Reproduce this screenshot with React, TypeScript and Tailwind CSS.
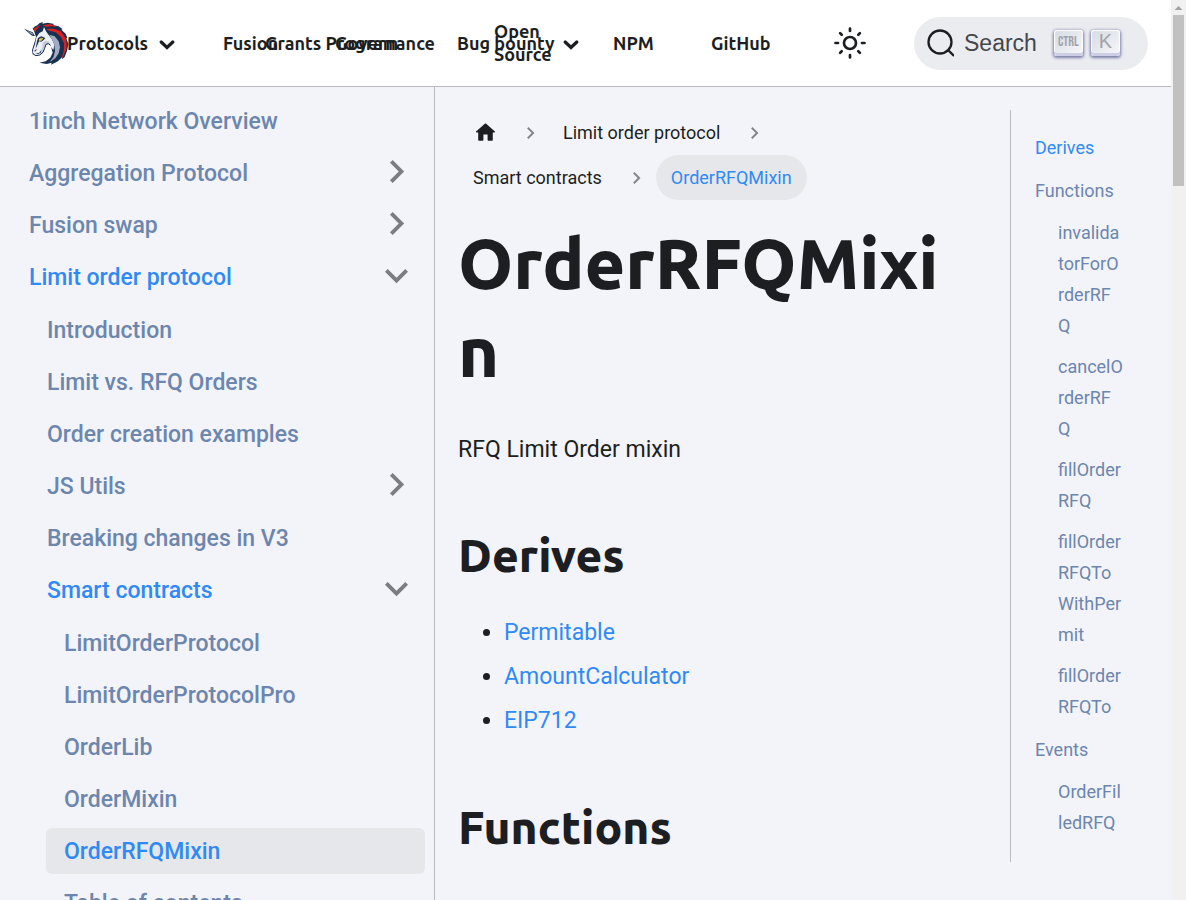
import React from "react";
import clsx from "clsx";

type NavItem = { label: string; state?: "open" | "closed"; active?: boolean; children?: NavItem[] };

const sidebar: NavItem[] = [
  { label: "1inch Network Overview" },
  { label: "Aggregation Protocol", state: "closed" },
  { label: "Fusion swap", state: "closed" },
  {
    label: "Limit order protocol",
    state: "open",
    children: [
      { label: "Introduction" },
      { label: "Limit vs. RFQ Orders" },
      { label: "Order creation examples" },
      { label: "JS Utils", state: "closed" },
      { label: "Breaking changes in V3" },
      {
        label: "Smart contracts",
        state: "open",
        children: [
          { label: "LimitOrderProtocol" },
          { label: "LimitOrderProtocolPro" },
          { label: "OrderLib" },
          { label: "OrderMixin" },
          { label: "OrderRFQMixin", active: true },
          { label: "Table of contents" },
        ],
      },
    ],
  },
];

// Long identifiers are split by hand so that they fit the narrow column.
const functionLinks = [
  ["invalida", "torForO", "rderRF", "Q"],
  ["cancelO", "rderRF", "Q"],
  ["fillOrder", "RFQ"],
  ["fillOrder", "RFQTo", "WithPer", "mit"],
  ["fillOrder", "RFQTo"],
];

function Logo() {
  return (
    <svg viewBox="72 66 135 129" className="h-[43px] w-[45px] shrink-0" aria-hidden="true">
      <path fill="#1b314f" d="M102 92 98 86 103 80 112 76 118 70 129 66 127 71 143 68 163 72 158 75 176 79 188 88 184 89 197 101 202 114 199 114 205 132 201 153 194 171 186 178 187 171 174 184 153 194 155 188 140 192 118 188 137 184 151 173 158 158 152 137 140 119 130 128 120 143 116 166 107 168 98 163 96 151 104 125 108 111Z" />
      <path fill="#1b314f" d="M72 86 98 97 105 108 96 107Z" />
      <path fill="#a9b3c6" d="M80 91 97 99 101 104 95 103Z" />
      <path fill="#eceff4" d="M132 81 138 94 146 105 156 118 163 134 160 150 152 140 146 133 137 134 134 146 128 158 118 165 106 165 99 159 99 150 105 133 109 112 118 99 128 94Z" />
      <path fill="#a1adc6" d="M148 104 164 109 176 124 180 142 176 160 166 175 148 187 160 172 165 154 163 134 156 118Z" />
      <path fill="#c4ccda" d="M128 128 137 122 146 124 152 134 146 133 137 134 134 146 128 158 118 165 121 155 127 144Z" />
      <path fill="none" stroke="#1b314f" strokeWidth="3" d="M152 136 145 131 138 133 134 145 129 157 119 165 107 167" />
      <path fill="#1b314f" d="M111 124 114 114 124 109 136 114 131 120 124 125 117 124 112 136 107 146ZM103 152 110 147 109 151 105 155ZM106 161 118 158 124 150 122 158 114 162Z" />
      <path fill="#ffd84c" d="M116 119 122 113 130 115 124 122 117 122Z" />
      <path fill="#1b314f" d="M121 115 125 116 123 119Z" />
      <path fill="#d82122" d="M101 86 115 78 121 73 116 82 111 87 105 96ZM128 76 150 72 174 81 155 79 138 80ZM139 86 161 86 182 94 197 115 200 134 198 150 190 168 184 176 188 164 192 148 192 129 183 111 167 97 147 92Z" />
    </svg>
  );
}

function Chevron({ className }: { className: string }) {
  return (
    <svg viewBox="6 6 12 12" className={className} fill="currentColor" aria-hidden="true">
      <path d="M8.59 16.59 13.17 12 8.59 7.410 10 6l6 6-6 6z" />
    </svg>
  );
}

function DownCaret() {
  return (
    <svg viewBox="0 0 16 10" className="mt-[3px] h-[10px] w-4 shrink-0" fill="none" stroke="currentColor" strokeWidth="3.2" strokeLinecap="round" aria-hidden="true">
      <path d="M2.2 2 8 7.5 13.8 2" />
    </svg>
  );
}

function Sun() {
  return (
    <svg viewBox="-16 -16 32 32" className="size-8" fill="none" stroke="currentColor" strokeWidth="2.7" strokeLinecap="round" aria-hidden="true">
      <circle r="6" />
      <path d="M0-14.5V-12M0 12V14.5M-14.5 0H-12M12 0H14.5M-9.9-9.9-8.3-8.3M8.3 8.3 9.9 9.9M-9.9 9.9-8.3 8.3M8.3-8.3 9.9-9.9" />
    </svg>
  );
}

function Header() {
  return (
    <header className="flex h-[87px] shrink-0 items-center border-b border-[#b9babd] bg-white pr-[23px] pl-6">
      <nav aria-label="Main" className="flex flex-1 items-center font-['Ubuntu','Noto_Sans',sans-serif] text-[18px] leading-[23px] font-semibold whitespace-nowrap">
        <a href="#home" aria-label="1inch docs" className="w-[43px]"><Logo /></a>
        <a href="#protocols" className="flex w-[156px] items-center gap-[11px]">Protocols <DownCaret /></a>
        <a href="#fusion" className="w-[42px]">Fusion</a>
        <a href="#grants" className="w-[70px]">Grants Program</a>
        <a href="#governance" className="w-[122px]">Governance</a>
        <a href="#bounty" className="w-[37px]">Bug bounty</a>
        <a href="#source" className="flex w-[119px] items-center gap-[9px]">
          <span className="w-[60px] whitespace-normal">Open Source</span>
          <DownCaret />
        </a>
        <a href="#npm" className="w-[98px]">NPM</a>
        <a href="#github">GitHub</a>
      </nav>
      <button aria-label="Switch theme" className="mr-12"><Sun /></button>
      <button className="flex h-[53px] w-[234px] items-center rounded-full bg-[#ebecf0] px-3 font-['Liberation_Sans',sans-serif] text-[23px] text-[#44464b]">
        <svg viewBox="0 0 28 28" className="size-7 text-[#1c1e21]" fill="none" stroke="currentColor" strokeWidth="2.3" aria-hidden="true">
          <circle cx="14" cy="13" r="11.5" />
          <path d="m21.5 20.5 6.500 6.500" />
        </svg>
        <span className="ml-[10px]">Search</span>
        <span className="ml-[17px] flex gap-2 text-[#a2a4ab]">
          <kbd className="flex h-[26px] w-[29px] items-center justify-center rounded-[3px] bg-linear-to-br from-[#d5dbe4] to-[#f8f8f8] pb-1 font-['Bebas_Neue','Oswald',sans-serif] text-[14px] shadow-[inset_0_-3px_0_0_#cdcde6,inset_0_0_1px_1px_#fff,0_1px_3px_1px_#7a7ca8]">CTRL</kbd>
          <kbd className="flex h-[26px] w-[29px] items-center justify-center rounded-[3px] bg-linear-to-br from-[#d5dbe4] to-[#f8f8f8] pb-1 font-['Liberation_Sans',sans-serif] text-[20px] shadow-[inset_0_-3px_0_0_#cdcde6,inset_0_0_1px_1px_#fff,0_1px_3px_1px_#7a7ca8]">K</kbd>
        </span>
      </button>
    </header>
  );
}

function SidebarList({ items, level }: { items: NavItem[]; level: number }) {
  return (
    <ul className={clsx("flex flex-col gap-[6px]", level === 1 && "mt-[7px] pl-[18px]", level === 2 && "mt-[7px] pl-[17px]")}>
      {items.map((item) => (
        <li key={item.label}>
          <div
            className={clsx(
              "flex h-[46px] items-center rounded-md",
              item.active && "bg-[#e6e7eb]",
              item.active || item.state === "open" ? "text-[#2f8af5]" : "text-[#6c86ad]",
            )}
          >
            <a href={"#" + item.label} className="flex-1 pl-[18px] text-[23px] leading-[29px] font-medium">{item.label}</a>
            {item.state && (
              <button aria-label={"Toggle " + item.label} className="mr-[17px] pb-1 text-[#7c7d81]">
                <Chevron className={clsx("size-[23px]", item.state === "open" && "rotate-90")} />
              </button>
            )}
          </div>
          {item.children && <SidebarList items={item.children} level={level + 1} />}
        </li>
      ))}
    </ul>
  );
}

function Breadcrumbs() {
  return (
    <nav aria-label="Breadcrumbs">
      <ol className="flex flex-wrap text-[18px] leading-[29px]">
        <li className="flex items-center">
          <a href="#home" aria-label="Home page" className="flex h-[45px] items-center px-[15px]">
            <svg viewBox="0 0 24 24" className="size-[25px]" fill="currentColor" aria-hidden="true">
              <path d="M10 19v-5h4v5c0 .55.45 1 1 1h3c.55 0 1-.45 1-1v-7h1.700c.46 0 .68-.57.33-.87L12.670 3.600c-.38-.34-.96-.34-1.340 0l-8.360 7.530c-.34.3-.13.87.33.87H5v7c0 .55.45 1 1 1h3c.55 0 1-.45 1-1z" />
            </svg>
          </a>
          <Chevron className="mx-[11px] h-3 w-[13px] text-[#85868a]" />
        </li>
        <li className="flex items-center">
          <a href="#limit" className="px-[15px] py-2">Limit order protocol</a>
          <Chevron className="mx-[13px] h-3 w-[13px] text-[#85868a]" />
        </li>
        <li className="flex items-center">
          <a href="#contracts" className="px-[15px] py-2">Smart contracts</a>
          <Chevron className="mx-[13px] h-3 w-[13px] text-[#85868a]" />
        </li>
        <li className="flex items-center">
          <span aria-current="page" className="rounded-full bg-[#e6e7eb] px-[15px] py-2 text-[#2f8af5]">OrderRFQMixin</span>
        </li>
      </ol>
    </nav>
  );
}

function Article() {
  return (
    <article className="min-w-0 flex-1 pr-6">
      <Breadcrumbs />
      <h1 className="mt-[19px] font-['Ubuntu','Noto_Sans',sans-serif] text-[70px] leading-[88px] font-extrabold break-words">OrderRFQMixin</h1>
      <p className="mt-9 text-[23px] leading-[38px]">RFQ Limit Order mixin</p>
      <h2 className="mt-[57px] font-['Ubuntu','Noto_Sans',sans-serif] text-[46px] leading-[58px] font-extrabold">Derives</h2>
      <ul className="mt-[30px] flex list-disc flex-col gap-[6px] pl-[46px] text-[23px] leading-[38px]">
        <li><a href="#permitable" className="text-[#2f8af5]">Permitable</a></li>
        <li><a href="#calculator" className="text-[#2f8af5]">AmountCalculator</a></li>
        <li><a href="#eip712" className="text-[#2f8af5]">EIP712</a></li>
      </ul>
      <h2 className="mt-[58px] font-['Ubuntu','Noto_Sans',sans-serif] text-[46px] leading-[58px] font-extrabold">Functions</h2>
    </article>
  );
}

function Toc() {
  return (
    <nav aria-label="On this page" className="w-[137px] shrink-0 self-start border-l border-[#b9babd] pt-[22px] pr-[22px] pb-6 pl-6 text-[18px] leading-[31px] text-[#6c86ad]">
      <ul className="flex flex-col gap-3">
        <li><a href="#derives" className="text-[#2f8af5]">Derives</a></li>
        <li>
          <a href="#functions">Functions</a>
          <ul className="mt-[11px] flex flex-col gap-[10px] pl-[23px]">
            {functionLinks.map((parts) => (
              <li key={parts.join("")}>
                <a href={"#" + parts.join("")}>
                  {parts.map((part, i) => (
                    <React.Fragment key={i}>
                      {i > 0 && <br />}
                      {part}
                    </React.Fragment>
                  ))}
                </a>
              </li>
            ))}
          </ul>
        </li>
        <li>
          <a href="#events">Events</a>
          <ul className="mt-[11px] pl-[23px] break-words">
            <li><a href="#filled">OrderFilledRFQ</a></li>
          </ul>
        </li>
      </ul>
    </nav>
  );
}

export default function App() {
  return (
    <div className="flex h-screen overflow-hidden bg-[#f3f4fa] font-['Roboto',sans-serif] text-[#1c1e21]">
      <div className="flex min-w-0 flex-1 flex-col">
        <Header />
        <div className="flex min-h-0 flex-1">
          <aside className="w-[435px] shrink-0 overflow-hidden border-r border-[#b9babd] pt-[11px] pr-[9px] pl-[11px]">
            <SidebarList items={sidebar} level={0} />
          </aside>
          <main className="flex min-w-0 flex-1 overflow-hidden pt-[23px] pr-6 pl-[23px]">
            <Article />
            <div className="w-6 shrink-0" />
            <Toc />
          </main>
        </div>
      </div>
      <div className="flex w-[15px] shrink-0 flex-col items-center bg-[#f1f1f1]" aria-hidden="true">
        <svg viewBox="0 0 15 15" className="size-[15px]"><path d="M3.500 10 7.500 6 11.500 10Z" fill="#a3a3a3" /></svg>
        <div className="h-[171px] w-[11px] bg-[#c1c1c1]" />
      </div>
    </div>
  );
}
